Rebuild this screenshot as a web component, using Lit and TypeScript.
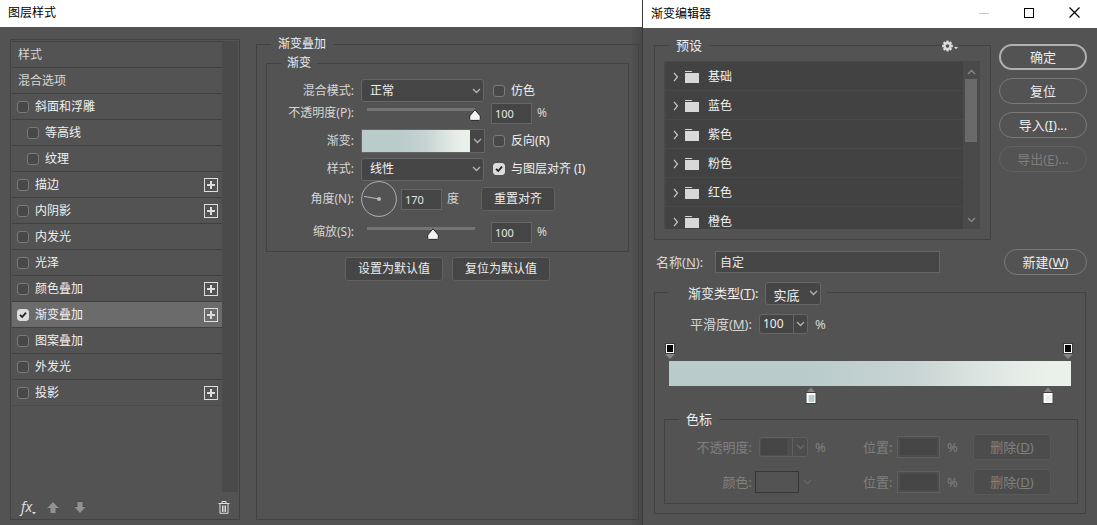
import { LitElement, html, css, svg, nothing } from "lit";
import { customElement } from "lit/decorators.js";
import { classMap } from "lit/directives/class-map.js";
import { styleMap } from "lit/directives/style-map.js";

const shared = css`
  * {
    box-sizing: border-box;
  }
  button,
  input,
  select {
    font: inherit;
    color: inherit;
    margin: 0;
    padding: 0;
    border: 0;
    background: none;
    border-radius: 0;
    outline: none;
  }
  fieldset {
    margin: 0;
    padding: 0;
    min-width: 0;
    border: 1px solid #424242;
  }
  legend {
    padding: 0 7px;
    line-height: 16px;
    color: #ececec;
  }
  .check {
    appearance: none;
    flex: none;
    width: 12px;
    height: 12px;
    border: 1px solid #7a7a7a;
    border-radius: 3px;
    background: #484848;
  }
  .check:checked {
    border-color: #dcdcdc;
    background: #dcdcdc
      url("data:image/svg+xml,%3Csvg xmlns='http://www.w3.org/2000/svg' viewBox='0 0 10 10'%3E%3Cpath d='M2 4.8 4.2 7 8 2.6' fill='none' stroke='%23222' stroke-width='1.8'/%3E%3C/svg%3E");
  }
  .field {
    background: #454545;
    border: 1px solid #666;
    color: #e6e6e6;
  }
  .btn {
    height: 24px;
    padding: 0 12px;
    background: #454545;
    border: 1px solid #616161;
    border-radius: 3px;
    color: #ececec;
    white-space: nowrap;
  }
  .dropdown {
    display: grid;
    align-items: center;
  }
  .dropdown > * {
    grid-area: 1 / 1;
  }
  .dropdown select {
    appearance: none;
    width: 100%;
    height: 23px;
    padding: 0 8px;
    background: #454545;
    border: 1px solid #666;
    border-radius: 3px;
    color: #f0f0f0;
  }
  .dropdown svg {
    justify-self: end;
    margin-right: 3px;
    pointer-events: none;
  }
  .title {
    display: flex;
    align-items: center;
    background: #fff;
    color: #000;
    padding: 0 8px;
  }
  svg {
    display: block;
    flex: none;
  }
`;

const ramp = css`linear-gradient(90deg, #b9cbcb 34%, #c7d4d3 60%, #e5ece7 86%, #eaf0ea 95%)`;

const chevron = (color = "#b4b4b4") => html`<svg width="9" height="6" viewBox="0 0 9 6">
  <path d="M1 1 4.500 4.500 8 1" fill="none" stroke=${color} stroke-width="1.300" />
</svg>`;

interface Effect {
  name: string;
  plain?: boolean;
  indent?: boolean;
  add?: boolean;
  on?: boolean;
}

const effects: Effect[] = [
  { name: "样式", plain: true },
  { name: "混合选项", plain: true },
  { name: "斜面和浮雕" },
  { name: "等高线", indent: true },
  { name: "纹理", indent: true },
  { name: "描边", add: true },
  { name: "内阴影", add: true },
  { name: "内发光" },
  { name: "光泽" },
  { name: "颜色叠加", add: true },
  { name: "渐变叠加", add: true, on: true },
  { name: "图案叠加" },
  { name: "外发光" },
  { name: "投影", add: true },
];

@customElement("effect-list")
class EffectList extends LitElement {
  static styles = [
    shared,
    css`
      :host {
        display: flex;
        flex-direction: column;
        border: 1px solid #424242;
        padding: 1px;
      }
      .body {
        flex: 1;
        display: flex;
      }
      .list {
        flex: 1;
        margin: 0;
        padding: 0;
        list-style: none;
      }
      .row {
        display: flex;
        align-items: center;
        height: 26px;
        padding: 0 4px 0 5px;
        border-top: 1px solid #404040;
        color: #f0f0f0;
      }
      .row:last-child {
        height: 27px;
        border-bottom: 1px solid #4b4b4b;
      }
      .row.on {
        background: #6b6b6b;
      }
      .row.plain {
        padding-left: 6px;
        color: #d6d6d6;
      }
      .row.indent {
        padding-left: 15px;
      }
      .item {
        flex: 1;
        display: flex;
        align-items: center;
        gap: 6px;
      }
      .track {
        width: 16px;
        background: #4a4a4a;
      }
      .foot {
        height: 26px;
        display: flex;
        align-items: center;
        gap: 15px;
        padding: 4px 8px 0 9px;
      }
      .fx {
        display: flex;
        align-items: flex-end;
        margin-right: -4px;
        font: italic 14px/16px "Noto Sans", sans-serif;
        color: #dcdcdc;
      }
      .bin {
        margin-left: auto;
      }
    `,
  ];

  render() {
    return html`
      <div class="body">
        <ul class="list">
          ${effects.map(
            (e) => html`<li class=${classMap({ row: true, plain: !!e.plain, indent: !!e.indent, on: !!e.on })}>
              ${e.plain
                ? html`<span>${e.name}</span>`
                : html`<label class="item"><input class="check" type="checkbox" .checked=${!!e.on} />${e.name}</label>`}
              ${e.add
                ? html`<button aria-label="添加">
                    <svg width="14" height="14" viewBox="0 0 14 14">
                      <rect x=".5" y=".5" width="13" height="13" fill="none" stroke="#dedede" />
                      <path d="M7 3v8M3 7h8" stroke="#dedede" stroke-width="2" />
                    </svg>
                  </button>`
                : nothing}
            </li>`
          )}
        </ul>
        <div class="track"></div>
      </div>
      <div class="foot">
        <button class="fx" aria-label="fx">
          fx<svg width="4" height="3" viewBox="0 0 4 3"><path d="M0 0h4L2 2.600z" fill="#dcdcdc" /></svg>
        </button>
        <button aria-label="上移">
          <svg width="12" height="12" viewBox="0 0 12 12">
            <path d="M6 .5 12 7H8.500v5h-5V7H0z" fill="#929292" />
            <path d="M.5 6 6 .3 11.500 6" fill="none" stroke="#3c3c3c" stroke-width=".7" />
          </svg>
        </button>
        <button aria-label="下移">
          <svg width="12" height="12" viewBox="0 0 12 12">
            <path d="M6 12 0 5.500h3.500V.5h5v5H12z" fill="#929292" />
            <path d="M0 5.500h3.500M3.500.5h5M8.500 5.500H12" stroke="#3c3c3c" stroke-width=".8" />
          </svg>
        </button>
        <button class="bin" aria-label="删除">
          <svg width="12" height="13" viewBox="0 0 12 13">
            <path
              d="M.5 2.500h11M4 2V.5h4V2M2 3v9.300h8V3M4.500 4.500v6.500M6 4.500v6.500M7.500 4.500v6.500"
              fill="none"
              stroke="#dedede"
            />
          </svg>
        </button>
      </div>
    `;
  }
}

@customElement("overlay-settings")
class OverlaySettings extends LitElement {
  static styles = [
    shared,
    css`
      :host {
        display: grid;
      }
      .outer {
        padding: 3px 9px 0 9px;
      }
      .outer > legend {
        margin-left: 5px;
      }
      .inner {
        padding: 8px 0 5px;
      }
      .inner > legend {
        margin-left: 14px;
        padding: 0 6px;
      }
      .row {
        display: flex;
        align-items: center;
        color: #d6d6d6;
      }
      .name {
        width: 87px;
        margin-right: 7px;
        text-align: right;
        white-space: nowrap;
      }
      .h22 {
        height: 22px;
      }
      .h23 {
        height: 23px;
      }
      .h28 {
        height: 28px;
      }
      .h34 {
        height: 34px;
      }
      .h38 {
        height: 38px;
      }
      .wide {
        width: 123px;
      }
      .tick {
        display: flex;
        align-items: center;
        gap: 6px;
        margin-left: 9px;
        color: #f0f0f0;
        white-space: nowrap;
      }
      .num {
        width: 41px;
        height: 21px;
        padding: 0 3px;
        font-size: 11px;
      }
      .unit {
        margin-left: 5px;
      }
      .range {
        appearance: none;
        width: 120px;
        height: 16px;
        margin-right: 10px;
      }
      .range::-webkit-slider-runnable-track {
        height: 16px;
        background: linear-gradient(#757575, #757575) center 3px / calc(100% - 12px) 3px no-repeat;
      }
      .range::-webkit-slider-thumb {
        appearance: none;
        width: 12px;
        height: 12px;
        margin-top: 4px;
        background: url("data:image/svg+xml,%3Csvg xmlns='http://www.w3.org/2000/svg' viewBox='0 0 12 12'%3E%3Cpath d='M6 .8 11.300 7v3.200l-1 1.200H1.700l-1-1.200V7z' fill='%23f2f2f2' stroke='%23262626'/%3E%3C/svg%3E");
      }
      .ramp {
        display: flex;
        width: 124px;
        height: 24px;
        margin-right: -1px;
        border: 1px solid #666;
      }
      .swatch {
        flex: 1;
        background: ${ramp};
      }
      .open {
        width: 14px;
        display: grid;
        place-items: center;
        background: #454545;
      }
      .dial {
        margin-right: 4px;
      }
      .align {
        margin-left: 22px;
      }
      .actions {
        display: flex;
        justify-content: center;
        gap: 9px;
        margin-top: 5px;
      }
    `,
  ];

  render() {
    return html`
      <fieldset class="outer">
        <legend>渐变叠加</legend>
        <fieldset class="inner">
          <legend>渐变</legend>
          <div class="row h23">
            <label class="name" for="mode">混合模式:</label>
            <span class="dropdown wide"><select id="mode"><option>正常</option></select>${chevron()}</span>
            <label class="tick"><input class="check" type="checkbox" />仿色</label>
          </div>
          <div class="row h22">
            <label class="name" for="opacity">不透明度(P):</label>
            <input id="opacity" class="range" type="range" min="0" max="100" value="100" />
            <input class="field num" aria-label="不透明度" value="100" /><span class="unit">%</span>
          </div>
          <div class="row h34">
            <label class="name" for="ramp">渐变:</label>
            <span class="ramp">
              <button id="ramp" class="swatch" aria-label="渐变"></button>
              <button class="open" aria-label="选择渐变">${chevron()}</button>
            </span>
            <label class="tick"><input class="check" type="checkbox" />反向(R)</label>
          </div>
          <div class="row h22">
            <label class="name" for="style">样式:</label>
            <span class="dropdown wide"><select id="style"><option>线性</option></select>${chevron()}</span>
            <label class="tick"><input class="check" type="checkbox" checked />与图层对齐 (I)</label>
          </div>
          <div class="row h38">
            <label class="name" for="angle">角度(N):</label>
            <svg class="dial" width="36" height="36" viewBox="0 0 36 36">
              <circle cx="18" cy="18" r="17.400" fill="none" stroke="#b0b0b0" />
              <path d="M3 15.400 18 18" stroke="#b8b8b8" />
              <circle cx="18" cy="18" r="2" fill="#b8b8b8" />
            </svg>
            <input id="angle" class="field num" value="170" /><span class="unit">度</span>
            <button class="btn align">重置对齐</button>
          </div>
          <div class="row h28">
            <label class="name" for="scale">缩放(S):</label>
            <input id="scale" class="range" type="range" min="10" max="150" value="96" />
            <input class="field num" aria-label="缩放" value="100" /><span class="unit">%</span>
          </div>
        </fieldset>
        <div class="actions">
          <button class="btn">设置为默认值</button>
          <button class="btn">复位为默认值</button>
        </div>
      </fieldset>
    `;
  }
}

const presets = ["基础", "蓝色", "紫色", "粉色", "红色", "橙色"];

const gearTeeth = [0, 45, 90, 135, 180, 225, 270, 315];

@customElement("preset-picker")
class PresetPicker extends LitElement {
  static styles = [
    shared,
    css`
      :host {
        display: block;
        position: relative;
      }
      .frame {
        padding: 8px 10px 10px 9px;
      }
      .frame > legend {
        margin-left: 5px;
      }
      .menu {
        position: absolute;
        top: 3px;
        right: 33px;
        display: flex;
        align-items: center;
        gap: 1px;
        background: #535353;
      }
      .box {
        display: flex;
        height: 168px;
        overflow: hidden;
        background: #424242;
        border-left: 2px solid #484848;
        border-top: 1px solid #484848;
        font-size: 12px;
      }
      .list {
        flex: 1;
        margin: 0;
        padding: 0;
        list-style: none;
      }
      .row {
        display: flex;
        align-items: center;
        height: 29px;
        padding: 2px 7px 0;
        border-bottom: 1px solid #494949;
        color: #f0f0f0;
      }
      .folder {
        margin: 0 9px 0 6px;
      }
      .bar {
        width: 17px;
        display: flex;
        flex-direction: column;
        align-items: center;
        padding: 7px 2px 6px;
        background: #4a4a4a;
      }
      .thumb {
        align-self: stretch;
        height: 63px;
        margin: 4px 1px auto 0;
        background: #696969;
      }
      .up {
        transform: rotate(180deg);
      }
    `,
  ];

  render() {
    return html`
      <fieldset class="frame">
        <legend>预设</legend>
        <div class="box">
          <ul class="list">
            ${presets.map(
              (name) => html`<li class="row">
                <svg width="6" height="10" viewBox="0 0 6 10">
                  <path d="M1 .8 4.500 5 1 9.200" fill="none" stroke="#c8c8c8" stroke-width="1.200" />
                </svg>
                <svg class="folder" width="14" height="12" viewBox="0 0 14 12">
                  <path d="M0 0h6.500l1 1H0zM0 2h14v10H0z" fill="#d8d8d8" />
                </svg>
                <span>${name}</span>
              </li>`
            )}
          </ul>
          <div class="bar">
            <span class="up">${chevron("#8a8a8a")}</span>
            <span class="thumb"></span>
            ${chevron("#8a8a8a")}
          </div>
        </div>
      </fieldset>
      <button class="menu" aria-label="预设菜单">
        <svg width="11" height="12" viewBox="-5.500 -6 11 12">
          ${gearTeeth.map(
            (a) => svg`<rect x="-1.200" y="-5.400" width="2.400" height="3" fill="#dcdcdc" transform="rotate(${a})" />`
          )}
          <circle r="2.900" fill="none" stroke="#dcdcdc" stroke-width="2.200" />
        </svg>
        <svg width="4" height="8" viewBox="0 0 4 8"><path d="M0 5h4L2 7.200z" fill="#dcdcdc" /></svg>
      </button>
    `;
  }
}

@customElement("gradient-ramp")
class GradientRamp extends LitElement {
  static styles = [
    shared,
    css`
      :host {
        display: block;
      }
      .strip {
        position: relative;
        height: 18px;
        margin: 0 3px 0 1px;
      }
      .stop {
        position: absolute;
        top: 0;
        transform: translateX(-50%);
      }
      .ramp {
        height: 25px;
        background: ${ramp};
      }
    `,
  ];

  render() {
    return html`
      <div class="strip">
        ${[0, 100].map(
          (at) => html`<button class="stop" style=${styleMap({ left: `${at}%` })} aria-label="不透明度色标">
            <svg width="10" height="17" viewBox="0 0 10 17">
              <rect x=".5" y=".5" width="9" height="10" fill="#000" stroke="#3c3c3c" />
              <rect x="1.500" y="1.500" width="7" height="8" fill="#000" stroke="#fff" />
              <path d="M0 11h10l-5 5z" fill="#858585" />
            </svg>
          </button>`
        )}
      </div>
      <div class="ramp"></div>
      <div class="strip">
        ${[
          { at: 35.5, color: "#b9cbcb" },
          { at: 95, color: "#eaf0ea" },
        ].map(
          (s) => html`<button class="stop" style=${styleMap({ left: `${s.at}%` })} aria-label="颜色色标">
            <svg width="11" height="18" viewBox="0 0 11 18">
              <path d="M1 6.500h9l-4.500-5z" fill="#858585" />
              <rect x=".5" y="6.500" width="10" height="11" fill="#fff" stroke="#3c3c3c" />
              <rect x="3" y="9" width="6" height="7" fill=${s.color} />
            </svg>
          </button>`
        )}
      </div>
    `;
  }
}

@customElement("gradient-editor")
class GradientEditor extends LitElement {
  static styles = [
    shared,
    css`
      :host {
        display: block;
        font-size: 13px;
        background: #535353;
        border-left: 1px solid #383838;
        color: #d6d6d6;
      }
      .title {
        height: 28px;
        padding-right: 17px;
        padding-bottom: 3px;
        font-size: 12px;
      }
      .caption {
        flex: 1;
        padding-top: 2px;
      }
      .controls {
        display: flex;
        gap: 35px;
      }
      .main {
        padding: 9px 10px 11px 11px;
      }
      .top {
        display: flex;
        gap: 8px;
      }
      .picker {
        flex: 1;
      }
      .side {
        display: flex;
        flex-direction: column;
        gap: 8px;
        width: 88px;
        padding-top: 7px;
      }
      .pill {
        height: 26px;
        border: 1px solid #7a7a7a;
        border-radius: 13px;
        color: #ececec;
      }
      .pill.primary {
        border: 2px solid #b0b0b0;
      }
      .pill:disabled {
        border-color: #616161;
        color: #7e7e7e;
      }
      .naming {
        display: flex;
        align-items: center;
        margin-top: 9px;
        padding-left: 2px;
      }
      .naming label {
        width: 59px;
      }
      .naming input {
        flex: 1;
        min-width: 0;
        height: 22px;
        margin-right: 64px;
        padding: 0 4px;
        font-size: 12px;
      }
      .naming .pill {
        width: 83px;
      }
      .type {
        margin: 4px 1px 0 0;
        padding: 7px 7px 9px 9px;
      }
      .type > legend {
        display: flex;
        align-items: center;
        gap: 6px;
        margin-left: 4px;
        padding: 2px 6px 0 20px;
        line-height: 24px;
      }
      .solid {
        width: 56px;
      }
      .row {
        display: grid;
        grid-template-columns: 87px 49px 41px 27px 43px 19px 78px;
        column-gap: 7px;
        align-items: center;
        height: 24px;
        white-space: nowrap;
      }
      .type > .row {
        padding-left: 1px;
      }
      .name {
        text-align: right;
      }
      .combo {
        display: flex;
        height: 20px;
        background: #454545;
        border: 1px solid #666;
        border-radius: 3px;
      }
      .combo input {
        width: 33px;
        padding: 0 3px;
        font-size: 12px;
        color: #f0f0f0;
      }
      .combo button {
        flex: 1;
        display: grid;
        place-items: center;
        border-left: 1px solid #666;
      }
      .ramp {
        margin: 7px 7px 0 5px;
      }
      .stops {
        display: grid;
        row-gap: 9px;
        margin-top: 7px;
        padding: 7px 0 8px;
      }
      .stops > legend {
        margin-left: 14px;
      }
      .stops .row {
        height: 26px;
        color: #808080;
      }
      .stops .combo,
      .stops .combo button {
        border-color: #5f5f5f;
      }
      .stops .combo {
        background: #4d4d4d;
      }
      .stops .combo input {
        width: 26px;
        margin: 1px 5px 1px 1px;
        background: #454545;
      }
      .pos {
        width: 43px;
        height: 22px;
        background: #454545;
        border: 1px solid #5f5f5f;
        box-shadow: inset 0 0 0 2px #4d4d4d;
      }
      .stops .btn {
        height: 26px;
        background: #4c4c4c;
        border-color: #595959;
        color: #808080;
      }
      .paint {
        display: flex;
        align-items: center;
        gap: 4px;
        margin-left: -4px;
      }
      .chip {
        flex: none;
        width: 44px;
        height: 22px;
        border: 1px solid #363636;
      }
    `,
  ];

  render() {
    return html`
      <header class="title">
        <span class="caption">渐变编辑器</span>
        <span class="controls">
          <button aria-label="最小化">
            <svg width="10" height="10" viewBox="0 0 10 10"><path d="M0 5.500h10" stroke="#c8c8c8" /></svg>
          </button>
          <button aria-label="最大化">
            <svg width="10" height="10" viewBox="0 0 10 10">
              <rect x=".5" y=".5" width="9" height="9" fill="none" stroke="#000" />
            </svg>
          </button>
          <button aria-label="关闭">
            <svg width="11" height="11" viewBox="0 0 11 11"><path d="M.5.5l10 10M10.500.5l-10 10" stroke="#000" stroke-width="1.200" /></svg>
          </button>
        </span>
      </header>
      <div class="main">
        <div class="top">
          <preset-picker class="picker"></preset-picker>
          <div class="side">
            <button class="pill primary">确定</button>
            <button class="pill">复位</button>
            <button class="pill">导入(<u>I</u>)...</button>
            <button class="pill" disabled>导出(<u>E</u>)...</button>
          </div>
        </div>
        <div class="naming">
          <label for="name">名称(<u>N</u>):</label>
          <input id="name" class="field" value="自定" />
          <button class="pill">新建(<u>W</u>)</button>
        </div>
        <fieldset class="type">
          <legend>
            <label for="kind">渐变类型(<u>T</u>):</label>
            <span class="dropdown solid"><select id="kind"><option>实底</option></select>${chevron()}</span>
          </legend>
          <div class="row">
            <label class="name" for="smooth">平滑度(<u>M</u>):</label>
            <span class="combo">
              <input id="smooth" value="100" /><button aria-label="平滑度选项">${chevron()}</button>
            </span>
            <span>%</span>
          </div>
          <gradient-ramp class="ramp"></gradient-ramp>
          <fieldset class="stops">
            <legend>色标</legend>
            <div class="row">
              <label class="name" for="alpha">不透明度:</label>
              <span class="combo">
                <input id="alpha" disabled /><button disabled aria-label="不透明度选项">${chevron("#6a6a6a")}</button>
              </span>
              <span>%</span>
              <label for="pos1">位置:</label>
              <input id="pos1" class="pos" disabled />
              <span>%</span>
              <button class="btn" disabled>删除(<u>D</u>)</button>
            </div>
            <div class="row">
              <label class="name" for="chip">颜色:</label>
              <span class="paint"><button id="chip" class="chip" disabled></button>${chevron("#686868")}</span>
              <span></span>
              <label for="pos2">位置:</label>
              <input id="pos2" class="pos" disabled />
              <span>%</span>
              <button class="btn" disabled>删除(<u>D</u>)</button>
            </div>
          </fieldset>
        </fieldset>
      </div>
    `;
  }
}

@customElement("app-root")
class AppRoot extends LitElement {
  static styles = [
    shared,
    css`
      :host {
        display: grid;
        grid-template-columns: minmax(0, 642fr) minmax(0, 455fr);
        min-height: 100vh;
        background: #535353;
        font: 12px/16px "Noto Sans", "Noto Sans CJK SC", sans-serif;
      }
      .layer {
        display: flex;
        flex-direction: column;
        background: linear-gradient(270deg, #484848, #535353 12px);
      }
      .title {
        height: 27px;
        padding-bottom: 2px;
      }
      .panes {
        flex: 1;
        display: grid;
        grid-template-columns: 230px minmax(0, 1fr);
        gap: 16px;
        padding: 9px 3px 5px 10px;
      }
      .effects {
        margin-top: 3px;
      }
    `,
  ];

  render() {
    return html`
      <section class="layer">
        <header class="title">图层样式</header>
        <div class="panes">
          <effect-list class="effects"></effect-list>
          <overlay-settings></overlay-settings>
        </div>
      </section>
      <gradient-editor></gradient-editor>
    `;
  }
}
